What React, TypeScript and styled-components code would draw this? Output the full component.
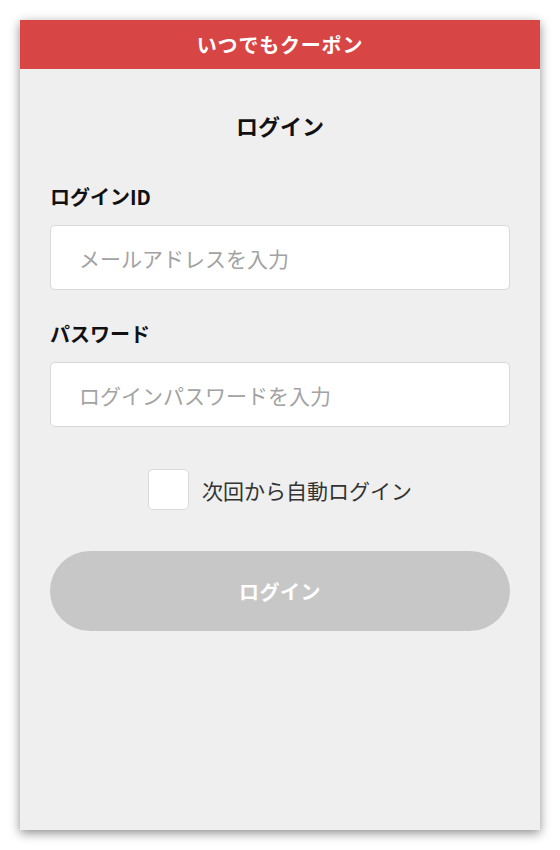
import React from "react";
import styled, { createGlobalStyle } from "styled-components";

const GlobalStyle = createGlobalStyle`
  html, body {
    margin: 0;
    padding: 0;
    background: #ffffff;
  }
  body {
    font-family: "Noto Sans CJK JP", "Noto Sans", sans-serif;
  }
  * { box-sizing: border-box; }
`;

const Page = styled.div`
  padding: 20px;
  width: 560px;
`;

const Phone = styled.div`
  width: 520px;
  height: 810px;
  background: #efefef;
  box-shadow: 0 3px 10px rgba(0, 0, 0, 0.45);
  display: flex;
  flex-direction: column;
`;

const Header = styled.header`
  height: 49px;
  background: #d84545;
  color: #ffffff;
  display: flex;
  align-items: center;
  justify-content: center;
  font-size: 20px;
  font-weight: 700;
  letter-spacing: 0.8px;
`;

const Body = styled.main`
  padding: 29px 30px 0;
  display: flex;
  flex-direction: column;
`;

const Title = styled.h1`
  margin: 0 0 31px;
  text-align: center;
  font-size: 22px;
  font-weight: 700;
  color: #111;
  line-height: 54px;
`;

const Label = styled.label`
  display: block;
  font-size: 20px;
  font-weight: 700;
  color: #111;
  line-height: 28px;
  margin-bottom: 14px;
`;

const Input = styled.input<{ $gap?: number }>`
  width: 460px;
  height: 65px;
  border: 1.5px solid #d8d8d8;
  border-radius: 5px;
  background: #fff;
  padding: 0 28px;
  font-family: inherit;
  font-size: 21px;
  color: #333;
  outline: none;
  margin-bottom: ${(p) => p.$gap ?? 0}px;
  &::placeholder {
    color: #a3a3a3;
  }
`;

const CheckRow = styled.label`
  display: flex;
  align-items: center;
  justify-content: center;
  gap: 13px;
  margin-top: 42px;
  margin-bottom: 41px;
  font-size: 21px;
  color: #333;
`;

const Box = styled.span`
  width: 41px;
  height: 41px;
  background: #fff;
  border: 1.5px solid #dadada;
  border-radius: 5px;
`;

const Button = styled.button`
  width: 460px;
  height: 80px;
  border: none;
  border-radius: 40px;
  background: #c8c7c8;
  color: #fff;
  font-family: inherit;
  font-size: 20px;
  font-weight: 700;
  letter-spacing: 0.5px;
`;

export default function App() {
  return (
    <>
      <GlobalStyle />
      <Page>
        <Phone>
          <Header>いつでもクーポン</Header>
          <Body>
            <Title>ログイン</Title>
            <Label>ログインID</Label>
            <Input placeholder="メールアドレスを入力" $gap={30} />
            <Label>パスワード</Label>
            <Input type="password" placeholder="ログインパスワードを入力" />
            <CheckRow>
              <Box />
              次回から自動ログイン
            </CheckRow>
            <Button>ログイン</Button>
          </Body>
        </Phone>
      </Page>
    </>
  );
}
